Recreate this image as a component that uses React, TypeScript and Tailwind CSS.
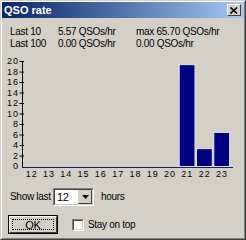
import React from 'react';

const hours = [12, 13, 14, 15, 16, 17, 18, 19, 20, 21, 22, 23];
const rates = [0, 0, 0, 0, 0, 0, 0, 0, 0, 19.4, 3.4, 6.5];
const yTicks = [0, 2, 4, 6, 8, 10, 12, 14, 16, 18, 20];

const Y0 = 166;
const PX_PER_UNIT = 5.25;
const SLOT = 17.3;
const X0 = 24;

function yOf(v: number) {
  return Y0 - v * PX_PER_UNIT;
}

function RateChart() {
  return (
    <svg width={242} height={132} viewBox="2 50 242 132" className="block">
      {yTicks.map((t) => (
        <g key={t}>
          <text
            x={19}
            y={yOf(t) + 3}
            textAnchor="end"
            fontSize={9}
            letterSpacing={1}
            fontFamily="'Liberation Sans', Arial, sans-serif"
            fill="#000"
          >
            {t}
          </text>
          {t > 0 && <line x1={19.5} x2={24} y1={yOf(t) + 0.5} y2={yOf(t) + 0.5} stroke="#000" />}
        </g>
      ))}
      <line x1={22.5} x2={22.5} y1={yOf(20)} y2={167} stroke="#000" />
      <line x1={22} x2={233} y1={167.5} y2={167.5} stroke="#1a1a70" />
      {rates.map((r, i) =>
        r > 0 ? (
          <rect
            key={i}
            x={X0 + i * SLOT + 0.5 - 1}
            y={yOf(r) + 0.5}
            width={SLOT - 1.5}
            height={Y0 - yOf(r)}
            fill="#000080"
            stroke="#e4e4f0"
            strokeWidth={1}
          />
        ) : null
      )}
      {hours.map((h, i) => (
        <text
          key={h}
          x={X0 + i * SLOT + SLOT / 2 - 1}
          y={177}
          textAnchor="middle"
          fontSize={9}
          letterSpacing={1}
          fontFamily="'Liberation Sans', Arial, sans-serif"
          fill="#000"
        >
          {h}
        </text>
      ))}
    </svg>
  );
}

export default function App() {
  return (
    <div
      className="w-[246px] h-[240px] bg-[#d4d0c8] border border-t-[#d4d0c8] border-l-[#d4d0c8] border-r-[#404040] border-b-[#404040] text-[10px] tracking-[-0.3px] leading-[12px] text-black overflow-hidden whitespace-nowrap"
      style={{ fontFamily: "'Liberation Sans', Arial, sans-serif" }}
    >
      <div className="h-full border border-t-white border-l-white border-r-[#808080] border-b-[#808080] flex flex-col">
        <div className="h-[16px] flex items-center justify-between bg-gradient-to-r from-[#0a246a] to-[#a6caf0]">
          <span className="pl-[2px] text-white font-bold text-[11px] tracking-normal">QSO rate</span>
          <div className="mr-[3px] w-[14px] h-[12px] bg-[#d4d0c8] border border-t-white border-l-white border-r-[#404040] border-b-[#404040] flex items-center justify-center">
            <svg width={8} height={7} viewBox="0 0 8 7">
              <path d="M0.5 0.5 L7 6.5 M7 0.5 L0.5 6.5" stroke="#000" strokeWidth={1.6} />
            </svg>
          </div>
        </div>

        <div className="mt-[8px] pl-[8px] grid grid-cols-[48px_78px_auto]">
          <span>Last 10</span>
          <span>5.57 QSOs/hr</span>
          <span>max 65.70 QSOs/hr</span>
          <span>Last 100</span>
          <span>0.00 QSOs/hr</span>
          <span>0.00 QSOs/hr</span>
        </div>

        <RateChart />

        <div className="mt-[6px] pl-[8px] flex items-center h-[18px]">
          <span className="w-[43px] shrink-0">Show last</span>
          <div className="shrink-0 w-[41px] h-[18px] bg-white border border-t-[#808080] border-l-[#808080] border-r-white border-b-white">
            <div className="h-full border border-t-[#404040] border-l-[#404040] border-r-[#d4d0c8] border-b-[#d4d0c8] flex items-center justify-between">
              <span className="pl-[2px] text-[11px]">12</span>
              <div className="w-[14px] h-full bg-[#d4d0c8] border border-t-[#d4d0c8] border-l-[#d4d0c8] border-r-[#404040] border-b-[#404040] flex items-center justify-center">
                <svg width={7} height={4} viewBox="0 0 7 4">
                  <path d="M0 0 H7 L3.5 4 Z" fill="#000" />
                </svg>
              </div>
            </div>
          </div>
          <span className="ml-[7px]">hours</span>
        </div>

        <div className="mt-[9px] pl-[6px] flex items-center">
          <div className="w-[50px] h-[19px] border border-black">
            <div className="h-full border border-t-white border-l-white border-r-[#404040] border-b-[#404040] p-[2px]">
              <div className="h-full border border-dotted border-black flex items-center justify-center text-[11px]">
                OK
              </div>
            </div>
          </div>
          <div className="ml-[14px] w-[12px] h-[12px] bg-white border border-t-[#808080] border-l-[#808080] border-r-white border-b-white">
            <div className="h-full border border-t-[#404040] border-l-[#404040] border-r-[#d4d0c8] border-b-[#d4d0c8]" />
          </div>
          <span className="ml-[4px]">Stay on top</span>
        </div>
      </div>
    </div>
  );
}
